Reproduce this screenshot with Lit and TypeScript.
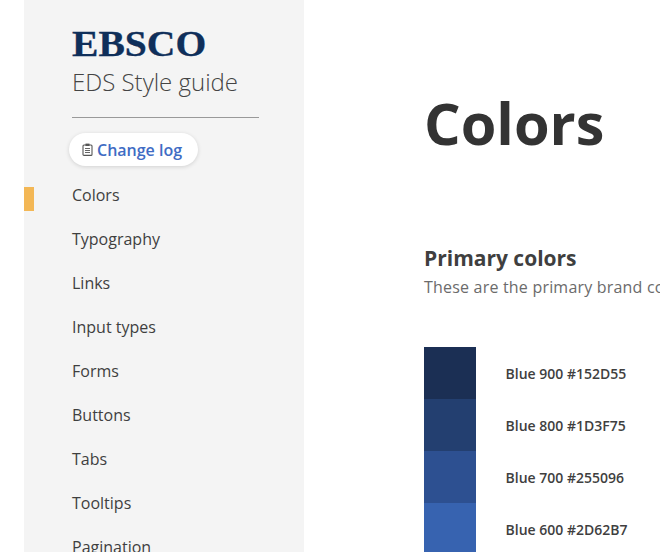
import { LitElement, html, css } from "lit";
import { customElement } from "lit/decorators.js";

const NAV = ["Colors", "Typography", "Links", "Input types", "Forms", "Buttons", "Tabs", "Tooltips", "Pagination"];
const SWATCHES = [
  { name: "Blue 900", hex: "#152D55", show: "#1B2F54" },
  { name: "Blue 800", hex: "#1D3F75", show: "#233F70" },
  { name: "Blue 700", hex: "#255096", show: "#2D5091" },
  { name: "Blue 600", hex: "#2D62B7", show: "#3763B0" },
];

@customElement("app-root")
export class AppRoot extends LitElement {
  static styles = css`
    :host {
      display: flex;
      width: 660px;
      height: 552px;
      overflow: hidden;
      background: #fff;
      font-family: "Open Sans", sans-serif;
      color: #3a3a3a;
    }
    .side {
      flex: none;
      width: 280px;
      margin-left: 24px;
      background: #f4f4f4;
      box-sizing: border-box;
      padding: 21px 45px 0 48px;
      overflow: hidden;
    }
    .logo {
      font: bold 36.5px/45px "Liberation Serif", serif;
      color: #0f2f5a;
      -webkit-text-stroke: 0.3px #0f2f5a;
      height: 44px;
      transform: scaleX(1.085);
      transform-origin: left center;
    }
    .sub {
      font-size: 24px;
      font-weight: 300;
      line-height: 34px;
      color: #444;
    }
    .rule {
      height: 1px;
      background: #999;
      margin-top: 18px;
    }
    .pill {
      display: inline-flex;
      align-items: center;
      gap: 4px;
      height: 33px;
      margin: 15px 0 0 -3px;
      padding: 0 16px 0 13px;
      background: #fff;
      border-radius: 17px;
      box-shadow: 0 1px 4px rgba(0, 0, 0, 0.14);
      font-size: 16px;
      font-weight: 600;
      color: #3f6cc4;
    }
    .pill svg { display: block; }
    nav { margin-top: 7px; }
    .item {
      position: relative;
      height: 44px;
      line-height: 44px;
      font-size: 16px;
      color: #3f3f3f;
    }
    .item.on::before {
      content: "";
      position: absolute;
      left: -48px;
      top: 14px;
      width: 10px;
      height: 24px;
      background: #f3b755;
    }
    main {
      flex: 1;
      min-width: 0;
      padding: 81px 0 0 120px;
      overflow: hidden;
    }
    h1 {
      margin: 0;
      font-size: 57.6px;
      line-height: 84px;
      font-weight: 700;
      color: #333;
    }
    h2 {
      margin: 78px 0 0;
      font-size: 21px;
      line-height: 30px;
      font-weight: 700;
      color: #3f3f3f;
    }
    .lead {
      font-size: 16px;
      line-height: 28px;
      letter-spacing: 0.2px;
      color: #6b6b6b;
      white-space: nowrap;
    }
    .swatches { margin-top: 46px; }
    .row {
      display: flex;
      align-items: center;
      gap: 29.5px;
      height: 52px;
    }
    .chip { width: 52px; height: 52px; flex: none; }
    .label {
      font-size: 14px;
      font-weight: 600;
      color: #3f3f3f;
      white-space: nowrap;
    }
  `;

  render() {
    return html`
      <aside class="side">
        <div class="logo">EBSCO</div>
        <div class="sub">EDS Style guide</div>
        <div class="rule"></div>
        <div class="pill">
          <svg width="11" height="13" viewBox="0 0 11 13" fill="none" stroke="#555" stroke-width="1.1">
            <rect x="1" y="2" width="9" height="10.4" rx="1"></rect>
            <rect x="3.5" y="0.6" width="4" height="2.4" fill="#555" stroke="none"></rect>
            <path d="M3 5.5h5M3 7.5h5M3 9.5h5" stroke-width="0.9"></path>
          </svg>
          Change log
        </div>
        <nav>
          ${NAV.map((n, i) => html`<div class="item ${i === 0 ? "on" : ""}">${n}</div>`)}
        </nav>
      </aside>
      <main>
        <h1>Colors</h1>
        <h2>Primary colors</h2>
        <div class="lead">These are the primary brand colors used across EBSCO products.</div>
        <div class="swatches">
          ${SWATCHES.map(
            (s) => html`<div class="row">
              <div class="chip" style="background:${s.show}"></div>
              <div class="label">${s.name} ${s.hex}</div>
            </div>`
          )}
        </div>
      </main>
    `;
  }
}
